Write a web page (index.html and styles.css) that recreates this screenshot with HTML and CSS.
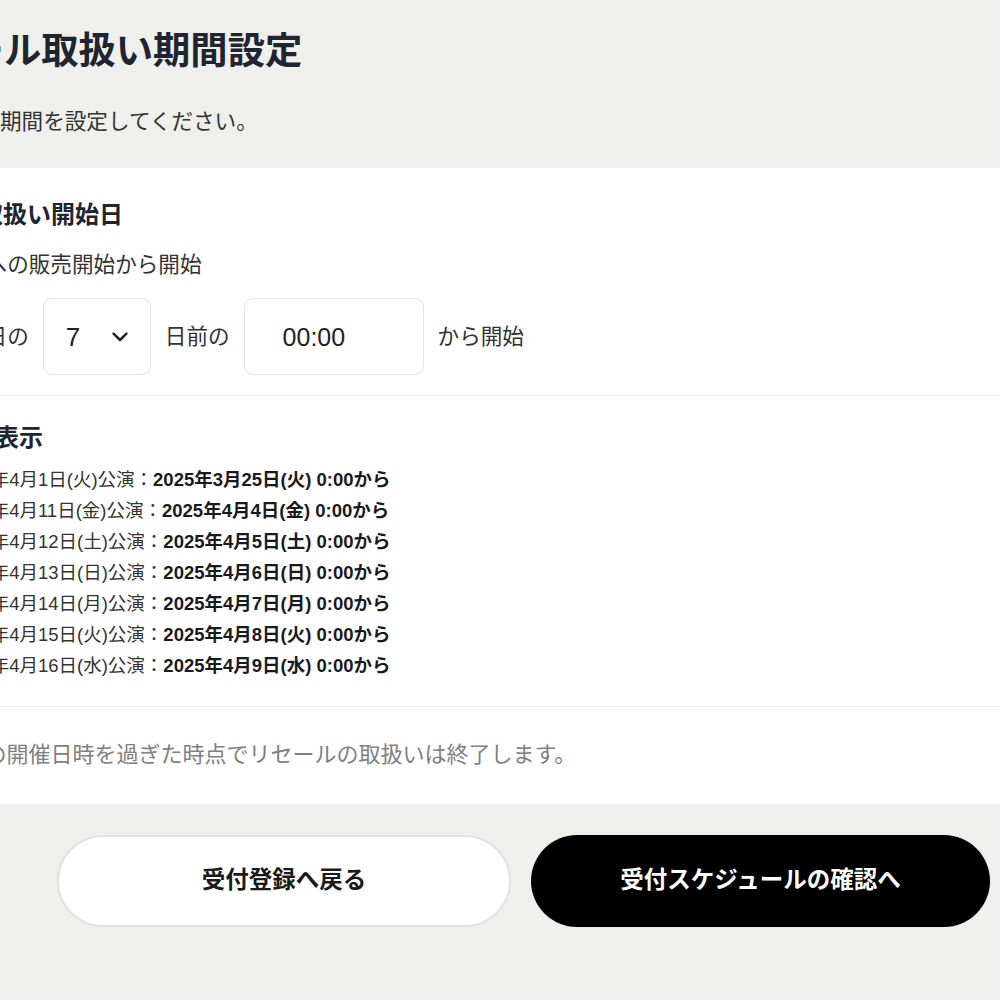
FILE: index.html
```html
<!DOCTYPE html>
<html lang="ja">
<head>
<meta charset="utf-8">
<title>リセール取扱い期間設定</title>
<link rel="stylesheet" href="styles.css">
</head>
<body>
<div class="page">
  <header class="head">
    <h1 class="title">リセール取扱い期間設定</h1>
    <p class="lead">リセールの期間を設定してください。</p>
  </header>
  <main class="card">
    <section class="block block-start">
      <h2 class="block-title">リセール取扱い開始日</h2>
      <div class="options">
        <label class="option"><span class="radio"></span><span>一般への販売開始から開始</span></label>
        <label class="option"><span class="radio radio-on"></span><span>公演日の</span><span class="select"><span>7</span><svg class="chevron" width="16" height="10" viewBox="0 0 16 10"><path d="M1.6 1.6 L8 8 L14.4 1.6" fill="none" stroke="#222" stroke-width="2.5" stroke-linecap="round" stroke-linejoin="round"/></svg></span><span>日前の</span><span class="time">00:00</span><span>から開始</span></label>
      </div>
    </section>
    <section class="block block-preview">
      <h2 class="block-title">日時(目安)表示</h2>
      <ul class="dates">
        <li>2025年4月1日(火)公演：<strong>2025年3月25日(火) 0:00から</strong></li>
        <li>2025年4月11日(金)公演：<strong>2025年4月4日(金) 0:00から</strong></li>
        <li>2025年4月12日(土)公演：<strong>2025年4月5日(土) 0:00から</strong></li>
        <li>2025年4月13日(日)公演：<strong>2025年4月6日(日) 0:00から</strong></li>
        <li>2025年4月14日(月)公演：<strong>2025年4月7日(月) 0:00から</strong></li>
        <li>2025年4月15日(火)公演：<strong>2025年4月8日(火) 0:00から</strong></li>
        <li>2025年4月16日(水)公演：<strong>2025年4月9日(水) 0:00から</strong></li>
      </ul>
    </section>
    <p class="note">公演の開催日時を過ぎた時点でリセールの取扱いは終了します。</p>
  </main>
  <div class="actions">
    <button class="btn btn-back" type="button">受付登録へ戻る</button>
    <button class="btn btn-next" type="button">受付スケジュールの確認へ</button>
  </div>
</div>
</body>
</html>
```

FILE: styles.css
```css
html, body {
  margin: 0;
  background: #efefeb;
}
body {
  font-family: "Liberation Sans", "Noto Sans CJK JP", sans-serif;
  color: #333;
}
.page {
  margin-left: -117px;
}
.head {
  padding: 25px 0 30px 9px;
}
.title {
  margin: 0;
  font-size: 37.3px;
  line-height: 52px;
  font-weight: 700;
  color: #1e2530;
}
.lead {
  margin: 29px 0 0;
  font-size: 21.6px;
  line-height: 32px;
  color: #333;
}
.card {
  background: #fff;
}
.block {
  border-bottom: 1px solid #ebebeb;
}
.block-start {
  padding: 30px 0 20px;
}
.block-title {
  margin: 0;
  font-size: 24px;
  line-height: 34px;
  font-weight: 700;
  color: #1e2530;
}
.options {
  display: flex;
  flex-direction: column;
  gap: 17px;
  margin-top: 17px;
}
.option {
  display: flex;
  align-items: center;
  gap: 14px;
  padding-left: 23.4px;
  font-size: 21.6px;
  line-height: 32px;
  color: #333;
}
.radio {
  box-sizing: border-box;
  width: 22px;
  height: 22px;
  border: 2px solid #c8c8c8;
  border-radius: 50%;
  background: #fff;
}
.radio-on {
  border: 7px solid #000;
}
.select {
  box-sizing: border-box;
  display: flex;
  align-items: center;
  justify-content: space-between;
  width: 108px;
  height: 77px;
  padding: 0 22px;
  border: 1px solid #e4e4e4;
  border-radius: 9px;
  font-size: 26px;
  color: #222;
  background: #fff;
}
.chevron {
  display: block;
}
.time {
  box-sizing: border-box;
  display: flex;
  align-items: center;
  width: 180px;
  height: 77px;
  padding-left: 38px;
  border: 1px solid #e4e4e4;
  border-radius: 9px;
  font-size: 25px;
  color: #222;
  background: #fff;
}
.block-preview {
  padding: 25px 0 25px;
}
.dates {
  list-style: none;
  margin: 9px 0 0;
  padding: 0 0 0 66.5px;
  font-size: 18.5px;
  line-height: 31px;
  color: #333;
}
.dates strong {
  font-weight: 700;
  color: #1a1a1a;
}
.note {
  margin: 0;
  padding: 32px 0 33px 57.5px;
  font-size: 22px;
  line-height: 32px;
  color: #808080;
}
.actions {
  display: grid;
  grid-template-columns: 454px 459px;
  column-gap: 20px;
  padding: 31px 0 0 174px;
}
.btn {
  box-sizing: border-box;
  height: 92px;
  border-radius: 46px;
  font-family: "Liberation Sans", "Noto Sans CJK JP", sans-serif;
  font-size: 23.5px;
  font-weight: 700;
  line-height: 1;
  cursor: pointer;
}
.btn-back {
  background: #fff;
  border: 2px solid #e2e2e2;
  color: #1a1a1a;
}
.btn-next {
  background: #000;
  border: 0;
  color: #fff;
}
```
